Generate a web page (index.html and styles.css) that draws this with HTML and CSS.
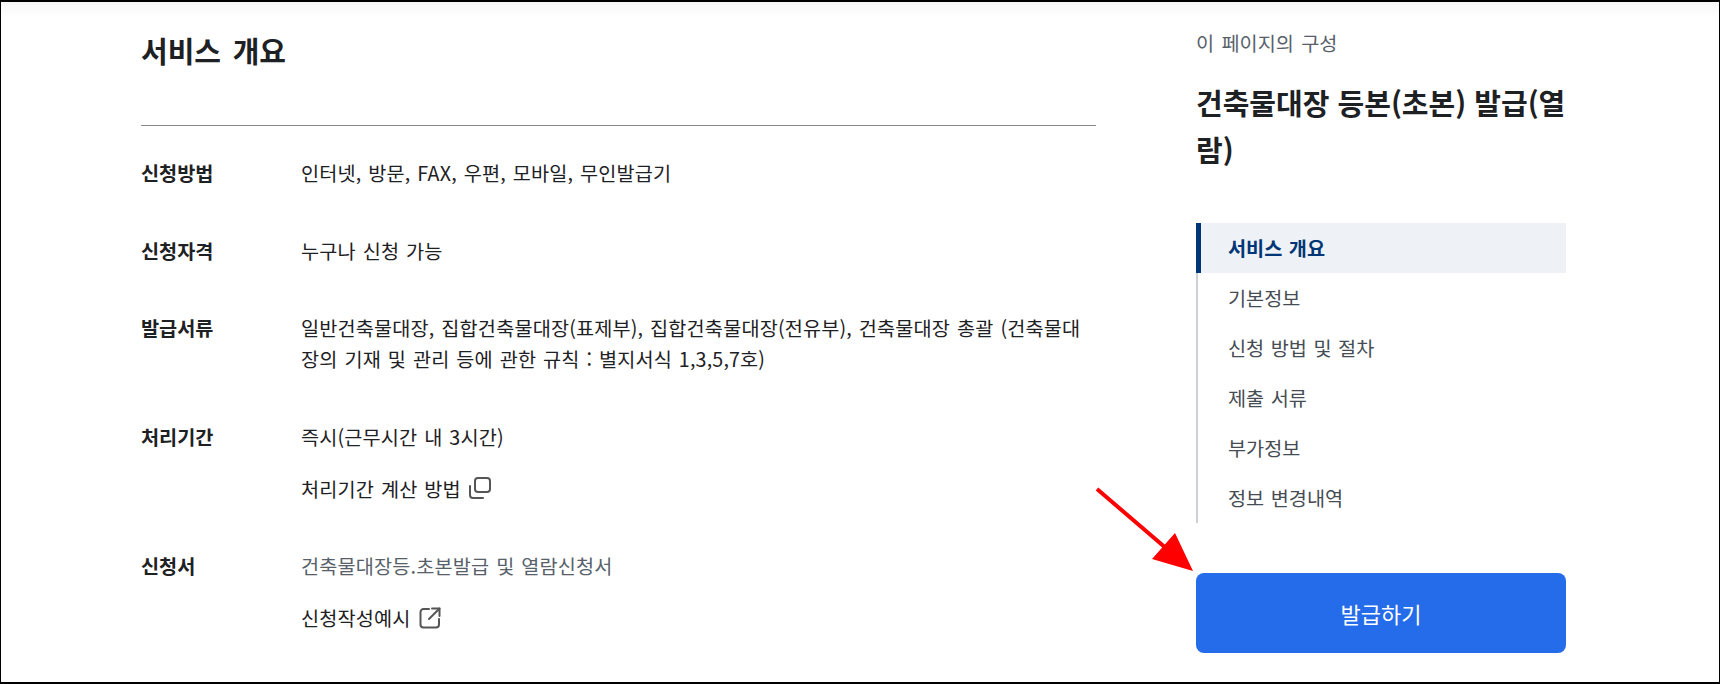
FILE: index.html
```html
<!DOCTYPE html>
<html lang="ko">
<head>
<meta charset="utf-8">
<title>건축물대장 등본(초본) 발급(열람)</title>
<link rel="stylesheet" href="styles.css">
</head>
<body>
<div class="frame">
  <div class="layout">
    <main class="main">
      <h2 class="section-title">서비스 개요</h2>
      <dl class="info">
        <div class="row">
          <dt>신청방법</dt>
          <dd><p>인터넷, 방문, FAX, 우편, 모바일, 무인발급기</p></dd>
        </div>
        <div class="row">
          <dt>신청자격</dt>
          <dd><p>누구나 신청 가능</p></dd>
        </div>
        <div class="row">
          <dt>발급서류</dt>
          <dd><p>일반건축물대장, 집합건축물대장(표제부), 집합건축물대장(전유부), 건축물대장 총괄 (건축물대<br>장의 기재 및 관리 등에 관한 규칙 : 별지서식 1,3,5,7호)</p></dd>
        </div>
        <div class="row">
          <dt>처리기간</dt>
          <dd>
            <p>즉시(근무시간 내 3시간)</p>
            <p class="link-line">처리기간 계산 방법
              <svg class="icon" viewBox="0 0 22 22" fill="none" stroke="#555" stroke-width="2" stroke-linecap="round" stroke-linejoin="round"><rect x="6" y="1" width="15" height="14" rx="3"/><path d="M1 9v9a3 3 0 0 0 3 3h10"/></svg>
            </p>
          </dd>
        </div>
        <div class="row">
          <dt>신청서</dt>
          <dd>
            <p class="muted">건축물대장등.초본발급 및 열람신청서</p>
            <p class="link-line">신청작성예시
              <svg class="icon" viewBox="0 0 22 22" fill="none" stroke="#555" stroke-width="2" stroke-linecap="round" stroke-linejoin="round"><path d="M10 2H4.500a3 3 0 0 0-3 3v12.500a3 3 0 0 0 3 3H17a3 3 0 0 0 3-3V12"/><path d="M13 1.500h7.500V9"/><path d="M20.500 1.500 10 12"/></svg>
            </p>
          </dd>
        </div>
      </dl>
    </main>
    <aside class="side">
      <p class="side-eyebrow">이 페이지의 구성</p>
      <h1 class="side-title">건축물대장 등본(초본) 발급(열람)</h1>
      <nav class="toc">
        <a class="toc-item active">서비스 개요</a>
        <a class="toc-item">기본정보</a>
        <a class="toc-item">신청 방법 및 절차</a>
        <a class="toc-item">제출 서류</a>
        <a class="toc-item">부가정보</a>
        <a class="toc-item">정보 변경내역</a>
      </nav>
      <a class="cta">발급하기</a>
    </aside>
  </div>
  <svg class="arrow" viewBox="-2 -2 110 100" fill="#ff0000"><path d="M1.300-1.500 67.800 55.500 78 44 96 82 55 70 65.200 58.500-1.300 1.500Z"/></svg>
</div>
</body>
</html>
```

FILE: styles.css
```css
* { box-sizing: border-box; }
html, body { margin: 0; padding: 0; background: #fff; }
body {
  font-family: "Noto Sans CJK KR", "Noto Sans", sans-serif;
  color: #1e2124;
  overflow: hidden;
  word-spacing: 1.8px;
}
p, h1, h2, dl, dd, dt { margin: 0; padding: 0; }
.frame {
  position: relative;
  width: 1720px;
  height: 684px;
  border-style: solid;
  border-color: #000;
  border-width: 2px 1px 2px 1px;
  overflow: hidden;
  background: linear-gradient(#f6f6f6, #fff 16px);
}
.layout {
  display: flex;
  padding-left: 140px;
}
.main { width: 955px; }
.section-title {
  font-size: 29px;
  font-weight: 700;
  line-height: 42px;
  height: 124px;
  padding-top: 27px;
  border-bottom: 1px solid #8a8a8a;
  word-spacing: 3.5px;
}
.info { padding-top: 31px; }
.row { display: flex; margin-bottom: 46.5px; }
dt {
  width: 160px;
  flex: none;
  font-size: 19.700px;
  font-weight: 700;
  line-height: 31px;
}
dd {
  font-size: 19.700px;
  line-height: 31px;
  flex: 1;
  display: flex;
  flex-direction: column;
  gap: 21px;
  letter-spacing: 0.15px;
  word-spacing: 1.2px;
}
.muted { color: #58616a; }
.link-line { display: flex; align-items: center; gap: 8px; }
.icon { width: 22px; height: 22px; }
.side { width: 370px; margin-left: 100px; }
.side-eyebrow {
  font-size: 19.700px;
  line-height: 28px;
  color: #58616a;
  padding-top: 27px;
  height: 55px;
}
.side-title {
  font-size: 29px;
  font-weight: 700;
  line-height: 47px;
  margin-top: 22px;
  word-spacing: 0;
}
.toc {
  margin-top: 50px;
  border-left: 2px solid #cdd1d5;
  display: flex;
  flex-direction: column;
}
.toc-item {
  height: 50px;
  font-size: 19.700px;
  line-height: 50px;
  padding-left: 30px;
  color: #464c53;
  word-spacing: 1px;
}
.toc-item.active {
  margin-left: -2px;
  padding-left: 27px;
  border-left: 5px solid #003675;
  background: #eef1f6;
  font-weight: 700;
  color: #003675;
}
.cta {
  display: flex;
  align-items: center;
  justify-content: center;
  height: 80px;
  margin-top: 50px;
  border-radius: 8px;
  background: #256ceb;
  color: #fff;
  font-size: 22px;
}
.arrow {
  position: absolute;
  left: 1094px;
  top: 485px;
  width: 110px;
  height: 100px;
}
```
